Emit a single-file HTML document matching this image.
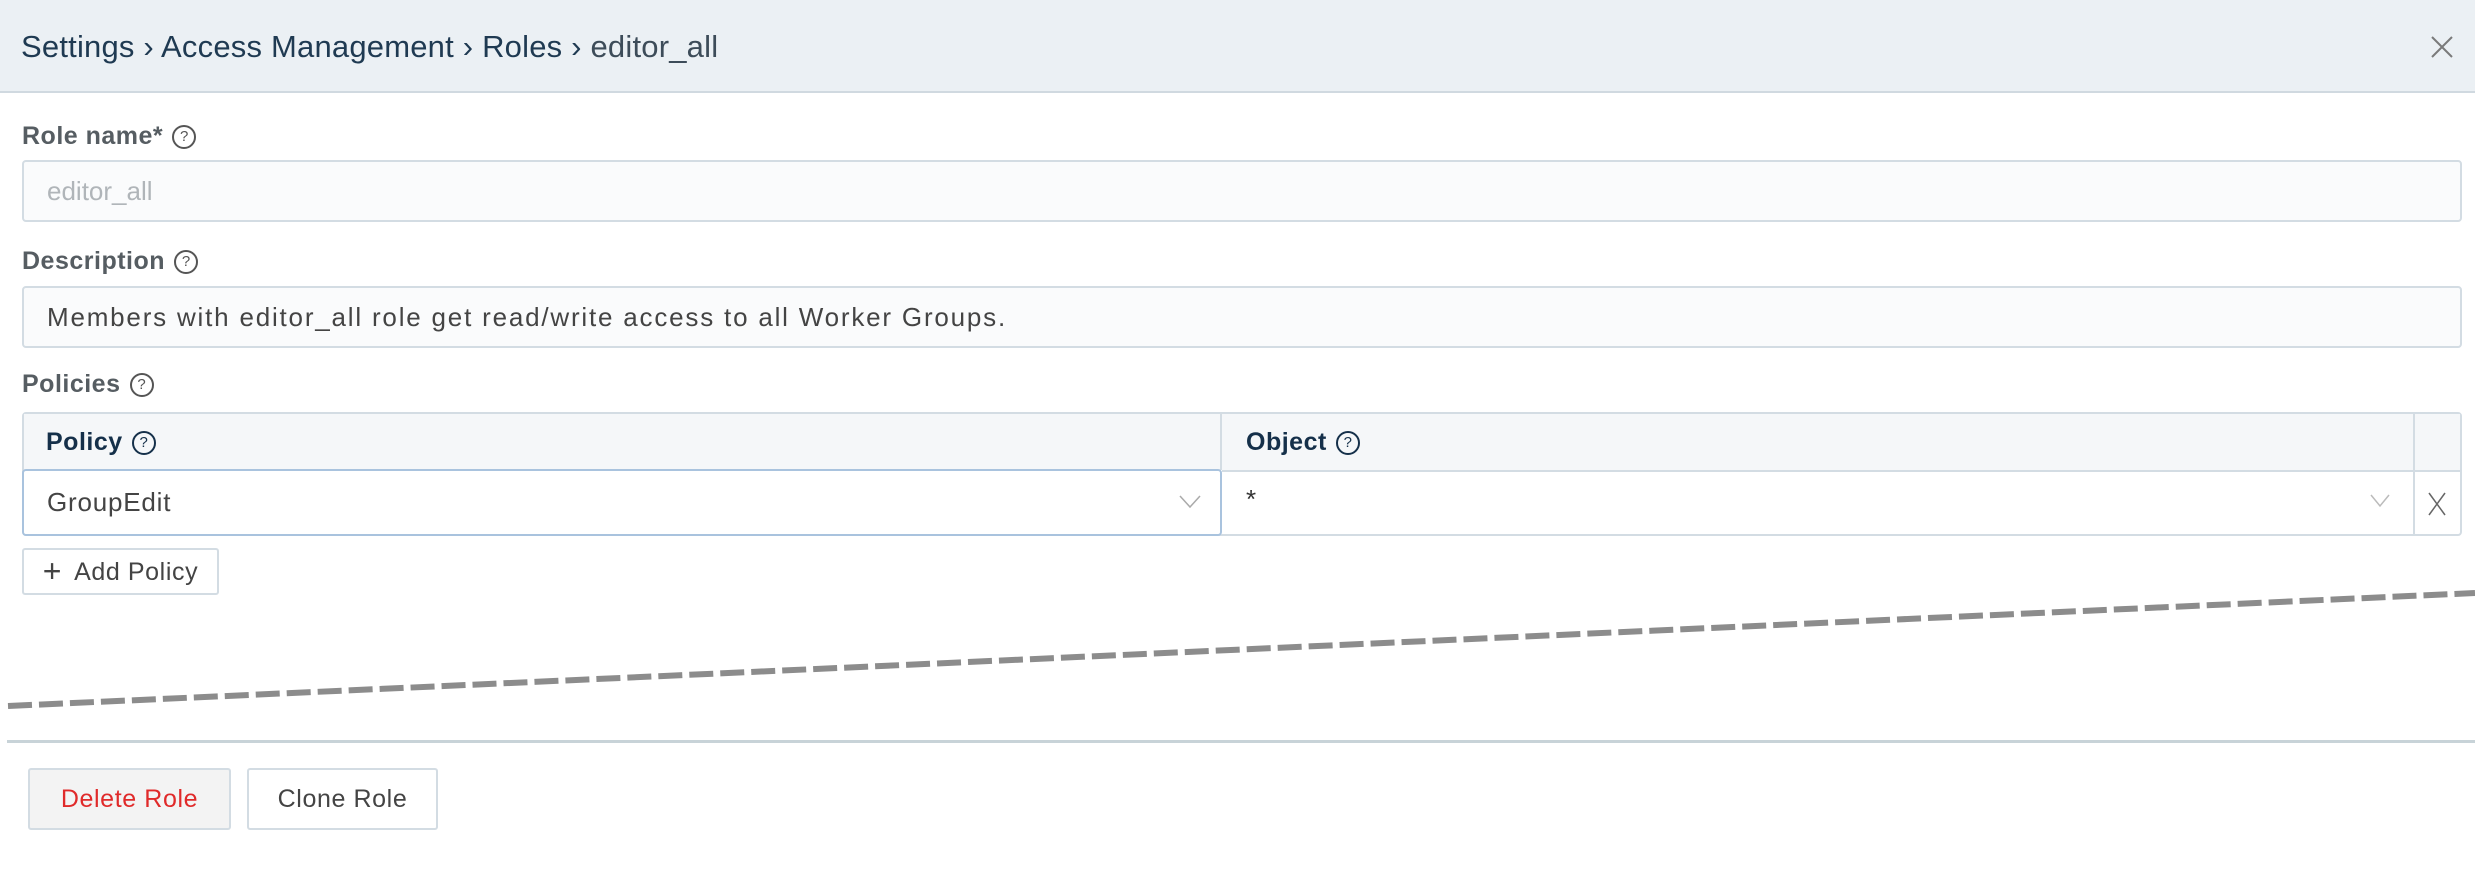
<!DOCTYPE html>
<html><head><meta charset="utf-8"><style>
*{box-sizing:border-box;margin:0;padding:0}
body{width:2475px;height:875px;background:#fff;font-family:"Liberation Sans",sans-serif;position:relative;overflow:hidden}
.hdr{position:absolute;left:0;top:0;width:2475px;height:93px;background:#ebf0f4;border-bottom:2px solid #d0d9e0}
.crumb{position:absolute;left:21px;top:29px;font-size:31px;letter-spacing:0.2px;color:#1f3a52;white-space:nowrap}
.crumb .last{color:#3d4c59}
.lbl{position:absolute;left:22px;font-size:25px;letter-spacing:0.5px;font-weight:bold;color:#565d62}
.q{display:inline-block;width:24px;height:24px;border:2px solid #555;border-radius:50%;font-size:15px;line-height:20px;text-align:center;font-weight:normal;vertical-align:3px;margin-left:9px;color:#555;letter-spacing:0}
.inp{position:absolute;left:22px;width:2440px;height:62px;border:2px solid #d3dce3;border-radius:4px;background:#fafbfc;font-size:26px;padding:0 0 0 23px;line-height:58px;color:#444}
.tbl{position:absolute;left:22px;top:412px;width:2440px;height:124px;border:2px solid #d3dce3;border-radius:4px}
.th{position:absolute;top:0;height:56px;background:#f5f7f9;font-size:25px;letter-spacing:0.5px;font-weight:bold;color:#15304a;line-height:56px}
.th .q{border-color:#15304a;color:#15304a}
.btn{position:absolute;border:2px solid #d3dce3;border-radius:3px;background:#fff;font-size:25px;letter-spacing:0.6px;color:#444;text-align:center}
</style></head><body>
<div class="hdr"><div class="crumb">Settings › Access Management › Roles › <span class="last">editor_all</span></div>
<svg style="position:absolute;left:2430px;top:35px" width="24" height="24"><path d="M2 2L22 22M22 2L2 22" stroke="#7a7a7a" stroke-width="2"/></svg></div>

<div class="lbl" style="top:122px">Role name*<span class="q">?</span></div>
<div class="inp" style="top:160px;color:#b0b5b9">editor_all</div>
<div class="lbl" style="top:247px">Description<span class="q">?</span></div>
<div class="inp" style="top:286px;color:#444;letter-spacing:1.8px">Members with editor_all role get read/write access to all Worker Groups.</div>
<div class="lbl" style="top:370px">Policies<span class="q">?</span></div>

<div class="tbl">
<div class="th" style="left:0;width:1198px;padding-left:22px;border-right:2px solid #d3dce3">Policy<span class="q">?</span></div>
<div class="th" style="left:1198px;width:1193px;padding-left:24px;border-right:2px solid #d3dce3">Object<span class="q">?</span></div>
<div class="th" style="left:2391px;width:45px"></div>
<div style="position:absolute;left:-2px;top:55px;width:1200px;height:67px;border:2px solid #a9c3de;border-radius:4px;background:#fff;font-size:26px;letter-spacing:0.8px;color:#444;line-height:63px;padding-left:23px">GroupEdit
<svg style="position:absolute;left:1155px;top:24px" width="22" height="14"><path d="M1 1L11 12L21 1" stroke="#aaa" stroke-width="1.5" fill="none"/></svg></div>
<div style="position:absolute;left:1198px;top:56px;width:1193px;height:64px;border-top:2px solid #d3dce3;border-right:2px solid #d3dce3;font-size:26px;color:#333;padding-left:24px;line-height:54px">*
<svg style="position:absolute;left:1148px;top:22px" width="20" height="14"><path d="M1 1L10 12L19 1" stroke="#bbb" stroke-width="1.5" fill="none"/></svg></div>
<div style="position:absolute;left:2391px;top:56px;width:45px;height:64px;border-top:2px solid #d3dce3">
<svg style="position:absolute;left:12px;top:20px" width="20" height="24"><path d="M2 1L18 23M18 1L2 23" stroke="#666" stroke-width="1.5"/></svg></div>
</div>

<div class="btn" style="left:22px;top:548px;width:197px;height:47px;line-height:43px">
<span style="font-size:32px;font-weight:300;vertical-align:-2px;margin-right:12px">+</span>Add Policy</div>

<svg style="position:absolute;left:0;top:0" width="2475" height="875">
<line x1="8" y1="706" x2="2475" y2="593" stroke="#8c8c8c" stroke-width="6" stroke-dasharray="24 7"/>
<rect x="7" y="740" width="2468" height="3" fill="#c8d3d8"/>
</svg>

<div class="btn" style="left:28px;top:768px;width:203px;height:62px;line-height:58px;background:#f3f3f3;color:#e02a2a">Delete Role</div>
<div class="btn" style="left:247px;top:768px;width:191px;height:62px;line-height:58px">Clone Role</div>
</body></html>
